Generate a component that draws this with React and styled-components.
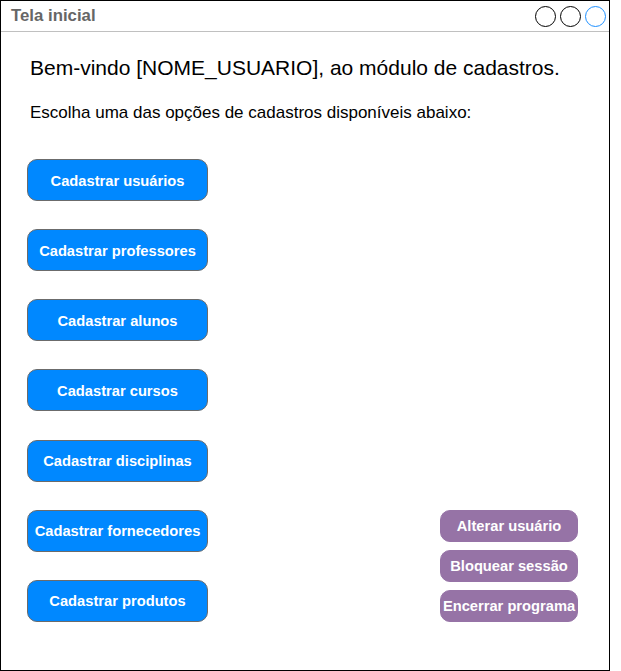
import React from 'react';
import styled, { createGlobalStyle } from 'styled-components';

const GlobalStyle = createGlobalStyle`
  html, body {
    margin: 0;
    padding: 0;
    background: #ffffff;
    font-family: 'Liberation Sans', Arial, sans-serif;
  }
`;

const Window = styled.div`
  box-sizing: border-box;
  width: 610px;
  height: 671px;
  border: 1px solid #000000;
  display: flex;
  flex-direction: column;
  background: #ffffff;
`;

const TitleBar = styled.div`
  box-sizing: border-box;
  height: 31px;
  border-bottom: 1px solid #c0c0c0;
  display: flex;
  align-items: center;
  justify-content: space-between;
  padding: 0 3px 0 10px;
`;

const Title = styled.span`
  font-size: 16.8px;
  font-weight: bold;
  color: #666666;
`;

const Controls = styled.div`
  display: flex;
  gap: 4px;
`;

const Circle = styled.span`
  box-sizing: border-box;
  width: 21px;
  height: 21px;
  border-radius: 50%;
  border: 1px solid ${(p) => (p.$active ? '#1e90ff' : '#000000')};
`;

const Content = styled.div`
  flex: 1;
  display: flex;
  flex-direction: column;
  padding: 24px 31px 0 26px;
`;

const Heading = styled.h1`
  margin: 0 0 0 3px;
  font-size: 21px;
  font-weight: normal;
  line-height: 24px;
  color: #000000;
`;

const Subtitle = styled.p`
  margin: 23px 0 0 3px;
  font-size: 17px;
  line-height: 20px;
  color: #000000;
`;

const Actions = styled.div`
  margin-top: 36px;
  display: flex;
  justify-content: space-between;
  align-items: flex-end;
`;

const Column = styled.div`
  display: flex;
  flex-direction: column;
  gap: ${(p) => p.$gap}px;
`;

const Button = styled.button`
  box-sizing: border-box;
  width: ${(p) => p.$width}px;
  height: ${(p) => p.$height}px;
  padding: 1px 0 0;
  border-radius: 10px;
  border: 1px solid ${(p) => (p.$variant === 'purple' ? '#9673a6' : '#6b6b6b')};
  background: ${(p) => (p.$variant === 'purple' ? '#9673a6' : '#0088ff')};
  color: #ffffff;
  font-family: 'Liberation Sans', Arial, sans-serif;
  font-size: 14.7px;
  font-weight: bold;
  white-space: nowrap;
  display: flex;
  align-items: center;
  justify-content: center;
  overflow: visible;
  cursor: pointer;
`;

const cadastros = [
  'Cadastrar usuários',
  'Cadastrar professores',
  'Cadastrar alunos',
  'Cadastrar cursos',
  'Cadastrar disciplinas',
  'Cadastrar fornecedores',
  'Cadastrar produtos',
];

const sessao = ['Alterar usuário', 'Bloquear sessão', 'Encerrar programa'];

export default function App() {
  return (
    <>
      <GlobalStyle />
      <Window>
        <TitleBar>
          <Title>Tela inicial</Title>
          <Controls>
            <Circle />
            <Circle />
            <Circle $active />
          </Controls>
        </TitleBar>
        <Content>
          <Heading>Bem-vindo [NOME_USUARIO], ao módulo de cadastros.</Heading>
          <Subtitle>Escolha uma das opções de cadastros disponíveis abaixo:</Subtitle>
          <Actions>
            <Column $gap={28.17}>
              {cadastros.map((label) => (
                <Button key={label} $width={181} $height={42}>
                  {label}
                </Button>
              ))}
            </Column>
            <Column $gap={8}>
              {sessao.map((label) => (
                <Button key={label} $variant="purple" $width={138} $height={32}>
                  {label}
                </Button>
              ))}
            </Column>
          </Actions>
        </Content>
      </Window>
    </>
  );
}
